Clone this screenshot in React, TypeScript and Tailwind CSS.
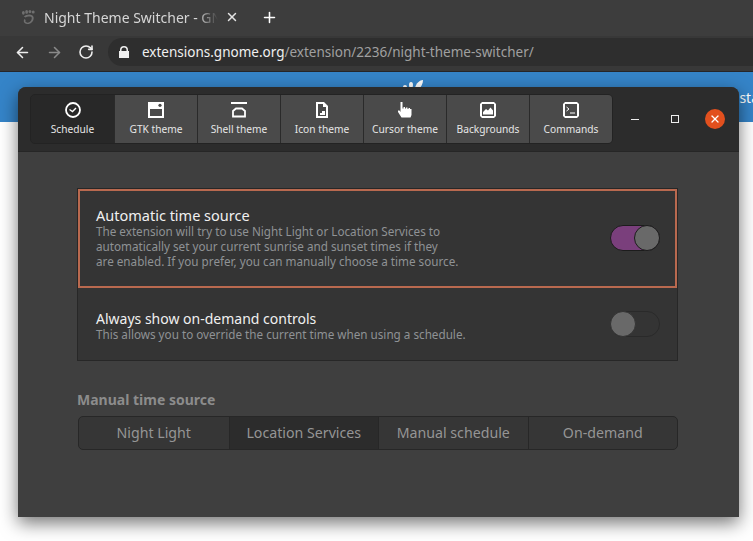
import React from "react";
import { ArrowLeft, ArrowRight, Plus, RotateCw, X } from "lucide-react";

const font = { fontFamily: '"Noto Sans", sans-serif' };

function ClockIcon() {
  return (
    <svg width="16" height="16" viewBox="0 0 16 16" fill="none" stroke="currentColor">
      <circle cx="8" cy="8" r="7" strokeWidth="1.8" />
      <path d="M4.5 7.5 L7.5 9.5 L11 6" strokeWidth="1.4" />
    </svg>
  );
}
function GtkIcon() {
  return (
    <svg width="16" height="16" viewBox="0 0 16 16">
      <path fill="currentColor" fillRule="evenodd" d="M0 0H16V16H0ZM2 7V14H14V7Z" />
      <circle cx="12" cy="3.3" r="1.6" fill="#4a4a4a" />
    </svg>
  );
}
function ShellIcon() {
  return (
    <svg width="16" height="16" viewBox="0 0 16 16" fill="none" stroke="currentColor" strokeWidth="2">
      <path d="M0 1H16" />
      <path d="M5 6.5H11L14 9V14.5H2V9Z" strokeWidth="1.8" />
    </svg>
  );
}
function FileIcon() {
  return (
    <svg width="16" height="16" viewBox="0 0 16 16">
      <path fill="currentColor" fillRule="evenodd" d="M2 0H10L14 4V16H2ZM4 2V14H12V5H9V2ZM6 13V11H8V9H11V13Z" />
    </svg>
  );
}
function HandIcon() {
  return (
    <svg width="16" height="16" viewBox="0 0 16 16">
      <path fill="currentColor" d="M3.5 0H5.5V6.5L6.5 6.5V5H8V6.5H9V5.5H10.5V7H11.5V6H13V7H14.5V13L13.5 15.5H4.5L1 10V8.5H2.5L3.5 10Z" />
    </svg>
  );
}
function ImageIcon() {
  return (
    <svg width="16" height="16" viewBox="0 0 16 16">
      <path fill="currentColor" fillRule="evenodd" d="M2 0H14L16 2V14L14 16H2L0 14V2ZM2 2V14H14V2ZM3 12.5V10L6 7L8 8.5L10.5 5.5L13 8.5V12.5Z" />
    </svg>
  );
}
function TerminalIcon() {
  return (
    <svg width="16" height="16" viewBox="0 0 16 16">
      <path fill="currentColor" fillRule="evenodd" d="M2 0H14L16 2V14L14 16H2L0 14V2ZM2 2V14H14V2Z" />
      <path d="M3.5 5L6 7L3.5 9" fill="none" stroke="currentColor" strokeWidth="1" />
      <path d="M7 11H12" fill="none" stroke="currentColor" strokeWidth="1" />
    </svg>
  );
}

const tabs = [
  { label: "Schedule", icon: <ClockIcon />, active: true },
  { label: "GTK theme", icon: <GtkIcon /> },
  { label: "Shell theme", icon: <ShellIcon /> },
  { label: "Icon theme", icon: <FileIcon /> },
  { label: "Cursor theme", icon: <HandIcon /> },
  { label: "Backgrounds", icon: <ImageIcon /> },
  { label: "Commands", icon: <TerminalIcon /> },
];

function Switch({ on }: { on?: boolean }) {
  return (
    <div
      className={
        "flex h-[26px] w-[50px] rounded-full border " +
        (on ? "mb-px justify-end border-[#1c1c1c] bg-[#7a3f7c]" : "justify-start border-[#2a2a2a] bg-[#343434]")
      }
    >
      <div
        className={
          "-m-px h-[26px] w-[26px] rounded-full border bg-[#696969] " +
          (on ? "border-[#1c1c1c]" : "border-[#343434]")
        }
      />
    </div>
  );
}

function GnomeFoot() {
  return (
    <svg width="15" height="15" viewBox="0 0 16 16" fill="#6f6f6f">
      <ellipse cx="2.5" cy="3" rx="1.5" ry="2" />
      <ellipse cx="6" cy="2" rx="1.5" ry="2" />
      <ellipse cx="9.5" cy="1.7" rx="1.5" ry="1.7" />
      <ellipse cx="13" cy="2.2" rx="1.6" ry="1.6" />
      <path d="M3 7C6 4 13 4 13.5 8C14 12 10 15.5 6.5 15C3 14.5 2 11 4 9.5L5 11C4 12 5 13.5 7 13.5C9.5 13.5 11.5 11 11.5 8.5C11.5 6.5 7 6.5 5 8Z" />
    </svg>
  );
}

export default function App() {
  return (
    <div className="relative h-[541px] w-[753px] overflow-hidden bg-white" style={font}>
      <div className="flex h-9 items-center bg-[#3d3d3d] pb-[2px] pl-[21px]">
        <GnomeFoot />
        <div className="ml-[8px] w-[174px] overflow-hidden whitespace-nowrap text-[14px] text-[#d6d6d6] [mask-image:linear-gradient(to_right,black_88%,transparent)]">
          Night Theme Switcher - GNOME
        </div>
        <X className="ml-[7px] text-[#e4e4e4]" size={14} strokeWidth={2.5} />
        <Plus className="ml-[22px] text-white" size={17} strokeWidth={2.2} />
      </div>
      <div className="flex h-[36px] items-center border-b border-[#26262a] bg-[#383838] pb-[3px] pl-[14px]">
        <ArrowLeft className="text-[#eeeeee]" size={17} strokeWidth={2.2} />
        <ArrowRight className="ml-[15px] text-[#8a8a8a]" size={17} strokeWidth={2.2} />
        <RotateCw className="ml-[15px] text-[#eeeeee]" size={16} strokeWidth={2.4} />
        <div className="ml-[14px] flex h-[28px] flex-1 items-center rounded-l-full bg-[#2e2e2e] pl-[11px]">
          <svg width="10" height="12" viewBox="0 0 10 12" fill="#eeeeee">
            <path fillRule="evenodd" d="M1 5V4a4 4 0 0 1 8 0v1h1v7H0V5ZM2.5 5h5V4a2.5 2.5 0 0 0-5 0Z" />
          </svg>
          <div className="ml-[13px] whitespace-nowrap text-[13.5px] text-[#a0a0a0]">
            <span className="text-[#f0f0f0]">extensions.gnome.org</span>/extension/2236/night-theme-switcher/
          </div>
        </div>
      </div>
      <div className="relative h-[50px] bg-[#3584c8]">
        <svg className="absolute left-[402px] top-[7px]" width="22" height="10" viewBox="0 0 22 10" fill="#ffffff">
          <ellipse cx="3" cy="8" rx="2" ry="2" />
          <ellipse cx="9" cy="6" rx="2" ry="3" />
          <path d="M13 9C14 4 18 1 21 1C21 5 19 8 17 10H13Z" />
        </svg>
        <span className="absolute left-[726px] top-[15px] whitespace-nowrap text-[14px] text-white">Install</span>
      </div>

      <div className="absolute left-[18px] top-[87px] flex h-[430px] w-[721px] flex-col overflow-hidden rounded-t-[8px] bg-[#3f3f3f] shadow-[0_6px_18px_rgba(0,0,0,0.55)]">
        <div className="flex h-[65px] shrink-0 items-center border-b border-[#262626] bg-[#2c2c2c] pl-[12px]">
          <div className="flex h-[50px] overflow-hidden rounded-[5px] border border-[#232323]">
            {tabs.map((t, i) => (
              <div
                key={t.label}
                className={
                  "flex w-[83px] flex-col items-center pt-[7px] text-[#e6e6e6] " +
                  (t.active ? "bg-[#282828]" : "bg-[#4a4a4a]") +
                  (i > 0 ? " border-l border-[#2a2a2a]" : "")
                }
              >
                <div className="h-4 w-4 text-white">{t.icon}</div>
                <div className="mt-[4px] whitespace-nowrap text-[10.2px] leading-[15px]">{t.label}</div>
              </div>
            ))}
          </div>
          <div className="ml-[18px] flex items-center">
            <div className="h-px w-[8px] bg-[#eeeeee]" />
            <div className="ml-[32px] h-[8px] w-[8px] border border-[#eeeeee]" />
            <div className="ml-[26px] flex h-5 w-5 items-center justify-center rounded-full bg-[#e2501e]">
              <X className="text-white" size={12} strokeWidth={2.5} />
            </div>
          </div>
        </div>

        <div className="flex flex-1 flex-col pl-[59px] pr-[61px] pt-[36px]">
          <div className="flex flex-col border border-[#272727] bg-[#343434]">
            <div className="flex h-[99px] items-center justify-between border-2 border-[#b9694f] pl-[16px] pr-[15px]">
              <div className="mb-[2px]">
                <div className="text-[14.5px] leading-[17px] text-[#f0f0f0]">Automatic time source</div>
                <div className="w-[380px] text-[11.7px] leading-[15px] text-[#8f9295]">
                  The extension will try to use Night Light or Location Services to<br />
                  automatically set your current sunrise and sunset times if they<br />
                  are enabled. If you prefer, you can manually choose a time source.
                </div>
              </div>
              <Switch on />
            </div>
            <div className="flex h-[72px] items-center justify-between pl-[18px] pr-[17px]">
              <div className="mt-[4px] flex flex-col gap-0">
                <div className="h-[17px] text-[14px] leading-[17px] text-[#f0f0f0]">Always show on-demand controls</div>
                <div className="h-[15px] text-[11.7px] leading-[15px] text-[#8f9295]">
                  This allows you to override the current time when using a schedule.
                </div>
              </div>
              <Switch />
            </div>
          </div>

          <div className="mt-[30px] text-[14px] font-bold leading-[18px] text-[#8c8c8c]">Manual time source</div>
          <div className="mt-[7px] ml-px grid h-[34px] grid-cols-4 overflow-hidden rounded-[5px] border border-[#272727] bg-[#363636] text-[14.2px] text-[#959595]">
            <div className="flex items-center justify-center">Night Light</div>
            <div className="flex items-center justify-center border-l border-[#272727] bg-[#2c2c2c]">Location Services</div>
            <div className="flex items-center justify-center border-l border-[#272727]">Manual schedule</div>
            <div className="flex items-center justify-center border-l border-[#272727]">On-demand</div>
          </div>
        </div>
      </div>
    </div>
  );
}
